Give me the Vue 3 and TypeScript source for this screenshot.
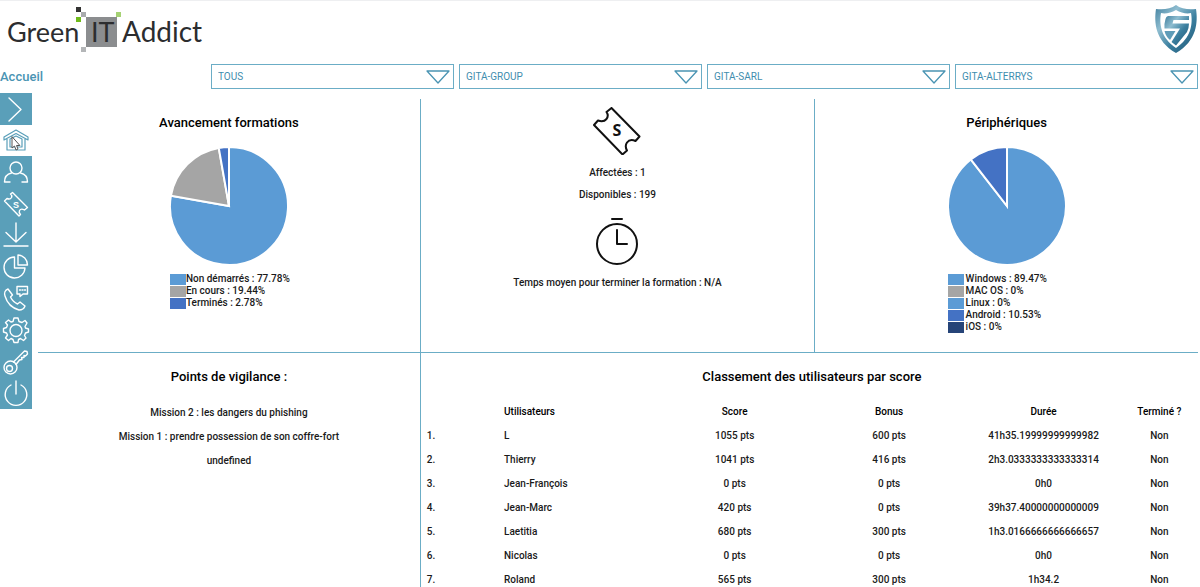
<script setup lang="ts">
import { ref } from 'vue'

interface Slice { label: string; value: number; color: string }
interface Row { user: string; score: number; bonus: number; time: string; done: string }

const filters = [
  { id: 'f-all', label: 'Périmètre', value: 'TOUS' },
  { id: 'f-group', label: 'Groupe', value: 'GITA-GROUP' },
  { id: 'f-company', label: 'Société', value: 'GITA-SARL' },
  { id: 'f-entity', label: 'Entité', value: 'GITA-ALTERRYS' },
]

const menu = ['expand', 'home', 'user', 'ticket', 'download', 'stats', 'contact', 'settings', 'key', 'power']
const active = ref('home')

const trainings: Slice[] = [
  { label: 'Non démarrés', value: 77.78, color: '#5b9bd5' },
  { label: 'En cours', value: 19.44, color: '#a5a5a5' },
  { label: 'Terminés', value: 2.78, color: '#4472c4' },
]
const devices: Slice[] = [
  { label: 'Windows', value: 89.47, color: '#5b9bd5' },
  { label: 'MAC OS', value: 0, color: '#a5a5a5' },
  { label: 'Linux', value: 0, color: '#5b9bd5' },
  { label: 'Android', value: 10.53, color: '#4472c4' },
  { label: 'iOS', value: 0, color: '#264478' },
]

const missions = [
  'Mission 2 : les dangers du phishing',
  'Mission 1 : prendre possession de son coffre-fort',
  'undefined',
]

const rows: Row[] = [
  { user: 'L', score: 1055, bonus: 600, time: '41h35.19999999999982', done: 'Non' },
  { user: 'Thierry', score: 1041, bonus: 416, time: '2h3.0333333333333314', done: 'Non' },
  { user: 'Jean-François', score: 0, bonus: 0, time: '0h0', done: 'Non' },
  { user: 'Jean-Marc', score: 420, bonus: 0, time: '39h37.40000000000009', done: 'Non' },
  { user: 'Laetitia', score: 680, bonus: 300, time: '1h3.0166666666666657', done: 'Non' },
  { user: 'Nicolas', score: 0, bonus: 0, time: '0h0', done: 'Non' },
  { user: 'Roland', score: 565, bonus: 300, time: '1h34.2', done: 'Non' },
]

function point(fraction: number): string {
  const a = fraction * 2 * Math.PI
  return `${(59 + 59 * Math.sin(a)).toFixed(2)} ${(59 - 59 * Math.cos(a)).toFixed(2)}`
}

function arcs(data: Slice[]) {
  let start = 0
  return data.filter((s) => s.value > 0).map((s) => {
    const end = start + s.value / 100
    const d = `M59 59 L${point(start)} A59 59 0 ${s.value > 50 ? 1 : 0} 1 ${point(end)} Z`
    start = end
    return { d, color: s.color }
  })
}

const charts = [
  { title: 'Avancement formations', data: trainings, paths: arcs(trainings) },
  { title: 'Périphériques', data: devices, paths: arcs(devices) },
]
</script>

<template>
  <div class="page">
    <header class="header">
      <svg class="logo" viewBox="0 0 210 54" role="img" aria-label="Green IT Addict">
        <rect x="86" y="16" width="31" height="30" fill="#8b8d8f" />
        <rect x="76" y="6" width="5" height="5" fill="#333" />
        <rect x="81" y="11" width="5" height="5" fill="#a9abad" />
        <rect x="76" y="16" width="5" height="5" fill="#6fba1c" />
        <rect x="116" y="11" width="5" height="5" fill="#a6d274" />
        <rect x="81" y="46" width="5" height="5" fill="#b4b6b8" />
        <text x="7" y="41">Green</text>
        <text x="91" y="41">IT</text>
        <text class="wide" x="122" y="41">Addict</text>
      </svg>
      <svg class="shield" viewBox="0 0 44 50" aria-hidden="true">
        <defs>
          <linearGradient id="steel" x1="0" y1="0" x2="1" y2="1">
            <stop offset="0" stop-color="#3f7f9e" />
            <stop offset="0.3" stop-color="#8fbdd0" />
            <stop offset="0.6" stop-color="#3b7f9f" />
            <stop offset="1" stop-color="#1f5675" />
          </linearGradient>
        </defs>
        <path d="M22 1C17 5 9 6 2 5C0 18 1 37 22 49C43 37 44 18 42 5C35 6 27 5 22 1Z" fill="url(#steel)" />
        <path d="M22 6C17 9 11 10 7 9C5 20 7 34 22 44C37 34 39 20 37 9C33 10 27 9 22 6Z" fill="#fff" />
        <path d="M14 12L35 12V16H19.500L18.500 19.500H35Q35 24 33 28L22 41.500L17.500 38L26 24.500H10.500Q10 20 11.500 15Q12 12.500 14 12Z" fill="url(#steel)" />
        <path d="M10.500 27H21.500L16 36Q12 33 10.500 27Z" fill="#5f9cb8" />
      </svg>
    </header>

    <div class="toolbar">
      <h1>Accueil</h1>
      <div class="filters">
        <div v-for="f in filters" :key="f.id" class="filter">
          <select :id="f.id" :aria-label="f.label">
            <option>{{ f.value }}</option>
          </select>
          <svg class="arrow" viewBox="0 0 26 16" aria-hidden="true"><path d="M2 2H24L13 14Z" /></svg>
        </div>
      </div>
    </div>

    <div class="body">
      <nav class="sidebar" aria-label="Menu">
        <button
          v-for="m in menu" :key="m" type="button" :aria-label="m"
          :class="{ active: active === m }" @click="active = m"
        >
          <svg viewBox="0 0 32 32" aria-hidden="true">
            <path v-if="m === 'expand'" d="M9 5L21 16.500L9 28" />
            <g v-else-if="m === 'home'">
              <path d="M4 16V13L16 6L28 13V16L16 9.500Z M7 15V26H25V15 M10 15V23H22V15L16 12Z" />
              <path class="pointer" d="M12 13V24L14.500 22L16 26L18 25L16.500 21.500H19.500Z" />
            </g>
            <g v-else-if="m === 'user'">
              <circle cx="16" cy="12" r="6" />
              <path d="M11.500 17C7 18 4.500 21 4.500 26H10M20.500 17C25 18 27.500 21 27.500 26H22" />
            </g>
            <g v-else-if="m === 'ticket'">
              <path d="M12.500 4.500L27.500 19.500L24.500 22Q21 20 19.500 22.500Q18.500 24.500 20.500 26.500L19 28L4.500 13L7 10.500Q10 12 11.500 9.500Q12.500 7.500 10.500 6Z" />
              <text x="16" y="19.500">S</text>
            </g>
            <path v-else-if="m === 'download'" d="M16 4V23M6 13.500L16 23L26 13.500M4 27H28" />
            <g v-else-if="m === 'stats'">
              <path d="M14.500 6A10.500 10.500 0 1 0 25 17H14.500Z" />
              <path d="M18 4A10 10 0 0 1 27.500 14H18Z" />
            </g>
            <g v-else-if="m === 'contact'">
              <path d="M8 7C5 8 4 11 5 14C7 21 12 26 19 28C22 28 24 27 25 24L20 20L17.500 22C14 20.500 12 18 10.500 15L12.500 13Z" />
              <path d="M17 4.500H27.500V12H23L20 14.500V12H17Z" />
              <path d="M19.500 8H20.500M22 8H23M24.500 8H25.500" />
            </g>
            <g v-else-if="m === 'settings'">
              <path d="M14 4H18L19 7.500L22 8.500L25 6.500L27 9L25 12.500L25.500 14L28.500 15V18L25.500 19L24.500 21.500L26 24L23.500 26.500L20.500 24.500L18.500 25.500L18 28.500H14L13 25.500L11 24.500L8.500 26.500L5.500 24L7.500 21L6.500 19L3.500 18V14.500L6.500 13.500L7.500 11L5.500 8.500L8.500 6L11 8L13 7.500Z" />
              <circle cx="16" cy="16.500" r="6" />
            </g>
            <g v-else-if="m === 'key'">
              <circle cx="10.500" cy="21.500" r="6.500" />
              <circle cx="9.500" cy="22.500" r="3" />
              <path d="M13.500 16L24.500 5L27 5.500L27.500 8L25.500 10L24 9.500L24 11.500L21.500 11.500L22 13.500L19.500 14L16 18.500" />
            </g>
            <path v-else d="M11 8A10.800 10.800 0 1 0 21 8M16 4V17" />
          </svg>
        </button>
      </nav>

      <main class="panels">
        <section class="panel top split">
          <h2>{{ charts[0].title }}</h2>
          <svg class="pie" viewBox="0 0 118 118" role="img" :aria-label="charts[0].title">
            <path v-for="p in charts[0].paths" :key="p.d" :d="p.d" :fill="p.color" />
          </svg>
          <ul class="legend">
            <li v-for="s in charts[0].data" :key="s.label">
              <i :style="{ background: s.color }"></i>{{ s.label }} : {{ s.value }}%
            </li>
          </ul>
        </section>

        <section class="panel top split licences">
          <svg class="big" viewBox="0 0 48 48" aria-hidden="true">
            <path d="M18.500 1L46.500 29.500L42.500 34Q37 31.500 34 35.500Q31.500 39 34 43.500L29.500 47.500L1 18L5 13.500Q10.500 15.500 13.500 12Q16 8.500 13.500 5Z" />
            <text x="24" y="29">S</text>
          </svg>
          <p>Affectées : 1</p>
          <p>Disponibles : 199</p>
          <svg class="big clock" viewBox="0 0 48 48" aria-hidden="true">
            <circle cx="24" cy="27" r="20" />
            <path d="M19 2H29M24 13V27H34" />
          </svg>
          <p>Temps moyen pour terminer la formation : N/A</p>
        </section>

        <section class="panel top">
          <h2>{{ charts[1].title }}</h2>
          <svg class="pie" viewBox="0 0 118 118" role="img" :aria-label="charts[1].title">
            <path v-for="p in charts[1].paths" :key="p.d" :d="p.d" :fill="p.color" />
          </svg>
          <ul class="legend spaced">
            <li v-for="s in charts[1].data" :key="s.label">
              <i :style="{ background: s.color }"></i>{{ s.label }} : {{ s.value }}%
            </li>
          </ul>
        </section>

        <section class="panel split">
          <h2>Points de vigilance :</h2>
          <ul class="missions">
            <li v-for="t in missions" :key="t">{{ t }}</li>
          </ul>
        </section>

        <section class="panel ranking">
          <h2>Classement des utilisateurs par score</h2>
          <table>
            <colgroup>
              <col class="narrow"><col><col><col><col><col class="narrow">
            </colgroup>
            <thead>
              <tr>
                <th></th><th class="left">Utilisateurs</th><th>Score</th><th>Bonus</th><th>Durée</th><th>Terminé ?</th>
              </tr>
            </thead>
            <tbody>
              <tr v-for="(r, i) in rows" :key="r.user">
                <td class="left">{{ i + 1 }}.</td>
                <td class="left">{{ r.user }}</td>
                <td>{{ r.score }} pts</td>
                <td>{{ r.bonus }} pts</td>
                <td>{{ r.time }}</td>
                <td>{{ r.done }}</td>
              </tr>
            </tbody>
          </table>
        </section>
      </main>
    </div>
  </div>
</template>

<style>
body { background: #fff; }
</style>

<style scoped>
* { box-sizing: border-box; }
.page {
  display: flex;
  flex-direction: column;
  height: 100vh;
  overflow: hidden;
  border-top: 1px solid #eeeff1;
  font-family: Roboto, "Liberation Sans", sans-serif;
  font-size: 10px;
  font-weight: 500;
  color: #1a1a1a;
}
.header {
  display: flex;
  justify-content: space-between;
  align-items: flex-start;
  height: 63px;
  padding-right: 2px;
}
.logo { width: 210px; height: 54px; }
.logo text { font-family: Lato, sans-serif; font-size: 27px; font-weight: 400; fill: #2c2d2f; }
.logo .wide { font-size: 28px; }
.shield { width: 44px; height: 50px; margin-top: 3px; }

.toolbar { display: flex; align-items: center; padding-right: 2px; }
h1 { width: 211px; margin: 0; font-size: 13px; line-height: 24px; font-weight: 500; color: #4a94b3; }
.filters { flex: 1; display: flex; gap: 5px; }
.filter { position: relative; flex: 1; }
select {
  display: block;
  width: 100%;
  height: 25px;
  padding: 0 32px 0 6px;
  appearance: none;
  background: #fff;
  border: 1px solid #6badc6;
  border-radius: 0;
  font-family: inherit;
  font-size: 10px;
  color: #3f8dae;
}
.arrow { position: absolute; right: 3px; top: 5px; width: 26px; height: 16px; pointer-events: none; }
.arrow path { fill: none; stroke: #4a94b3; stroke-width: 1.3; stroke-linejoin: round; }

.body { flex: 1; display: flex; align-items: stretch; gap: 6px; min-height: 0; padding-right: 2px; }
.sidebar {
  display: flex;
  flex-direction: column;
  width: 32px;
  height: 316px;
  margin-top: 4px;
  background: #5a9fb9;
}
.sidebar button {
  flex: 1;
  display: flex;
  align-items: center;
  min-height: 0;
  padding: 0;
  border: 0;
  background: none;
  cursor: pointer;
}
.sidebar svg { width: 32px; height: 32px; fill: none; stroke: #fff; stroke-width: 1.4; stroke-linejoin: round; stroke-linecap: round; }
.sidebar text { font-size: 9px; font-weight: 700; text-anchor: middle; fill: #fff; stroke: none; }
.sidebar .active { background: #fff; }
.sidebar .active svg { stroke: #5a9fb9; stroke-width: 1.2; }
.sidebar .pointer { fill: #fff; stroke: #555; stroke-width: 1; }

.panels {
  flex: 1;
  display: grid;
  grid-template-columns: 33fr 34fr 33fr;
  grid-template-rows: 254px auto;
  padding-top: 10px;
}
.panel { display: flex; flex-direction: column; align-items: center; min-width: 0; }
.split { border-right: 1px solid #6badc6; }
.top { border-bottom: 1px solid #6badc6; }
.panel h2 { margin: 16px 0 0; font-size: 13px; line-height: 16px; font-weight: 500; color: #000; }
.pie { width: 118px; height: 118px; margin-top: 16px; }
.pie path { stroke: #fff; stroke-width: 2; }
ul { margin: 0; padding: 0; list-style: none; }
.legend { width: 118px; margin-top: 8px; }
.legend li { display: flex; align-items: center; line-height: 12px; white-space: nowrap; }
.spaced li { gap: 2px; }
.legend i { flex: none; width: 16px; height: 11px; }

.licences { padding-top: 8px; }
.licences p { margin: 0; line-height: 22px; }
.big { width: 48px; height: 48px; fill: none; stroke: #111; stroke-width: 2; stroke-linejoin: round; stroke-linecap: round; }
.big + p { margin-top: 7px; }
.big text { font-family: "Open Sans", sans-serif; font-size: 16px; font-weight: 700; text-anchor: middle; fill: #111; stroke: none; }
.licences .clock { margin-top: 11px; }

.missions { margin-top: 16px; text-align: center; line-height: 24px; }
.ranking { grid-column: 2 / 4; padding-left: 5px; }
table { width: 100%; margin-top: 15px; table-layout: fixed; border-collapse: collapse; }
col { width: 20%; }
.narrow { width: 10%; }
th, td { height: 24px; padding: 0 1px; text-align: center; line-height: 20px; white-space: nowrap; }
th { font-weight: 500; color: #000; }
th.left, td.left { text-align: left; }
</style>
